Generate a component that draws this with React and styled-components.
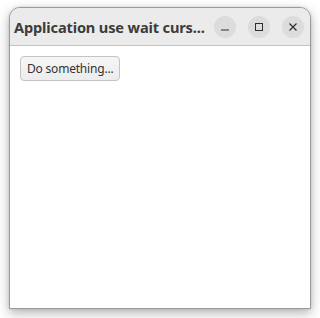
import React from "react";
import styled, { createGlobalStyle } from "styled-components";

const Global = createGlobalStyle`
  html, body { margin: 0; padding: 0; background: #ffffff; }
  body { width: 320px; height: 318px; overflow: hidden; }
`;

const Desktop = styled.div`
  width: 320px;
  height: 318px;
  padding: 7px 0 0 9px;
  box-sizing: border-box;
`;

const Window = styled.div`
  width: 302px;
  height: 302px;
  box-sizing: border-box;
  border: 1px solid #9b9b9b;
  border-radius: 11px 11px 0 0;
  background: #ffffff;
  box-shadow: 0 4px 12px rgba(0, 0, 0, 0.3), 0 0 3px rgba(0, 0, 0, 0.12);
  display: flex;
  flex-direction: column;
  overflow: hidden;
`;

const TitleBar = styled.div`
  height: 37px;
  flex: none;
  background: #ebebeb;
  border-bottom: 1px solid #c3c3c3;
  display: flex;
  align-items: center;
  padding: 0 6px 0 4px;
`;

const Title = styled.div`
  flex: none;
  font-family: "Noto Sans", "DejaVu Sans", sans-serif;
  font-weight: 700;
  font-size: 14.6px;
  color: #3c3c3c;
  white-space: nowrap;
  letter-spacing: -0.15px;
`;

const Controls = styled.div`
  margin-left: auto;
  display: flex;
  gap: 12px;
`;

const CtlButton = styled.div`
  width: 22px;
  height: 22px;
  border-radius: 50%;
  background: #dcdcdc;
  display: flex;
  align-items: center;
  justify-content: center;
`;

const Content = styled.div`
  flex: 1;
  padding: 10px 10px;
  display: flex;
  align-items: flex-start;
`;

const Button = styled.button`
  font-family: "Noto Sans", "DejaVu Sans", sans-serif;
  font-size: 12px;
  letter-spacing: -0.2px;
  color: #333333;
  height: 25px;
  padding: 0 6px;
  border: 1px solid #c4c4c4;
  border-radius: 4px;
  background: linear-gradient(#f6f6f6, #ececec);
`;

export default function App() {
  return (
    <>
      <Global />
      <Desktop>
        <Window>
          <TitleBar>
            <Title>Application use wait curs...</Title>
            <Controls>
              <CtlButton>
                <svg width="10" height="10" viewBox="0 0 10 10">
                  <rect x="1" y="7.5" width="8" height="1" fill="#2e2e2e" />
                </svg>
              </CtlButton>
              <CtlButton>
                <svg width="10" height="10" viewBox="0 0 10 10">
                  <rect x="1.5" y="1.5" width="7" height="7" fill="none" stroke="#2e2e2e" strokeWidth="1" />
                </svg>
              </CtlButton>
              <CtlButton>
                <svg width="10" height="10" viewBox="0 0 10 10">
                  <path d="M1.5 1.5 L8.5 8.5 M8.5 1.5 L1.5 8.5" stroke="#2e2e2e" strokeWidth="1.2" />
                </svg>
              </CtlButton>
            </Controls>
          </TitleBar>
          <Content>
            <Button>Do something...</Button>
          </Content>
        </Window>
      </Desktop>
    </>
  );
}
